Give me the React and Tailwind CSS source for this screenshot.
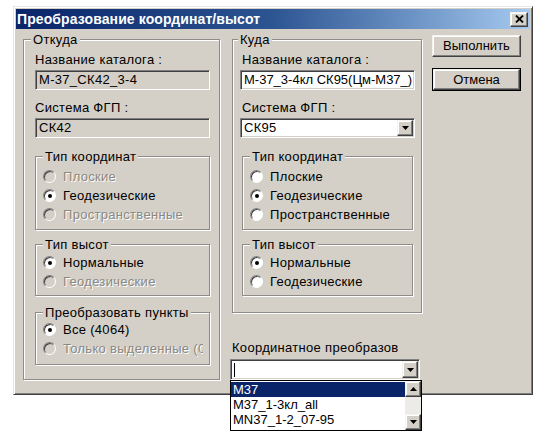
import React from "react";

const sunken =
  "border border-t-[#808080] border-l-[#808080] border-b-white border-r-white shadow-[inset_1px_1px_0_#404040,inset_-1px_-1px_0_#d4d0c8]";
const raised =
  "border border-t-[#f4f3ef] border-l-[#f4f3ef] border-b-[#404040] border-r-[#404040] shadow-[inset_-1px_-1px_0_#808080,inset_1px_1px_0_#ffffff]";
const etched =
  "border border-[#8e8c88] shadow-[1px_1px_0_#ffffff,inset_1px_1px_0_#ffffff]";

function Legend({ children, className = "" }) {
  return (
    <legend className={`px-[2px] bg-[#d4d0c8] leading-[15px] ${className}`}>
      {children}
    </legend>
  );
}

function Radio({ label, checked, disabled, clip }) {
  return (
    <div className="flex items-center h-[19px]">
      <span
        className={`w-[13px] h-[13px] shrink-0 rounded-full border border-t-[#808080] border-l-[#808080] border-b-white border-r-white shadow-[inset_1px_1px_0_#404040] flex items-center justify-center ${
          disabled ? "bg-[#d4d0c8]" : "bg-white"
        }`}
      >
        {checked && <span className="w-[4px] h-[4px] rounded-full bg-black" />}
      </span>
      <span
        className={`ml-[7px] whitespace-nowrap overflow-hidden ${clip ? "w-[140px]" : ""} ${
          disabled ? "text-[#8a8884] [text-shadow:1px_1px_0_#ffffff]" : "text-black"
        }`}
      >
        {label}
      </span>
    </div>
  );
}

function DownArrow() {
  return (
    <svg width="7" height="4" viewBox="0 0 7 4">
      <path d="M0 0h7L3.5 4z" fill="#000" />
    </svg>
  );
}

function UpArrow() {
  return (
    <svg width="7" height="4" viewBox="0 0 7 4">
      <path d="M0 4h7L3.5 0z" fill="#000" />
    </svg>
  );
}

function ArrowButton({ up }) {
  return (
    <div className={`w-[16px] h-[16px] bg-[#d4d0c8] flex items-center justify-center ${raised}`}>
      {up ? <UpArrow /> : <DownArrow />}
    </div>
  );
}

export default function App() {
  return (
    <div className="w-[540px] h-[442px] bg-white overflow-hidden font-['Liberation_Sans',Arial,sans-serif] text-[13px] tracking-[0.3px] text-black">
      <div
        className={`relative ml-[13px] mt-[6px] w-[520px] h-[389px] bg-[#d4d0c8] p-[2px] border border-t-[#e8e6e0] border-l-[#e8e6e0] border-b-[#404040] border-r-[#404040] shadow-[inset_1px_1px_0_#ffffff,inset_-1px_-1px_0_#808080]`}
      >
        {/* Title bar */}
        <div className="h-[20px] flex items-center justify-between bg-linear-to-r from-[#0a246a] via-[#2d5592] via-50% to-[#a6caf0] pl-[1px] pr-[2px]">
          <span className="text-white font-bold text-[14px] leading-[20px] whitespace-nowrap tracking-[0.1px]">
            Преобразование координат/высот
          </span>
          <div className={`w-[18px] h-[15px] bg-[#d4d0c8] flex items-center justify-center ${raised}`}>
            <svg width="9" height="8" viewBox="0 0 9 8">
              <path d="M1 0.5L8 7.5M8 0.5L1 7.5" stroke="#000" strokeWidth="1.8" />
            </svg>
          </div>
        </div>

        {/* Body */}
        <div className="flex items-start pl-[7px] pt-[3px]">
          {/* Left: Откуда */}
          <fieldset className={`w-[197px] h-[348px] pl-[11px] pr-[9px] ${etched}`}>
            <Legend className="-ml-[4px]">Откуда</Legend>
            <div className="mt-[5px] leading-[15px]">Название каталога :</div>
            <div className={`mt-[3px] h-[20px] bg-[#d4d0c8] pl-[3px] leading-[18px] ${sunken}`}>
              M-37_СК42_3-4
            </div>
            <div className="mt-[10px] leading-[15px]">Система ФГП :</div>
            <div className={`mt-[3px] h-[20px] bg-[#d4d0c8] pl-[3px] leading-[18px] ${sunken}`}>
              СК42
            </div>

            <fieldset className={`mt-[11px] pl-[7px] pb-[5px] ${etched}`}>
              <Legend>Тип координат</Legend>
              <div className="mt-[3px]">
                <Radio label="Плоские" disabled />
                <Radio label="Геодезические" checked />
                <Radio label="Пространственные" disabled />
              </div>
            </fieldset>

            <fieldset className={`mt-[7px] pl-[7px] pb-[4px] ${etched}`}>
              <Legend>Тип высот</Legend>
              <div className="mt-[1px]">
                <Radio label="Нормальные" checked />
                <Radio label="Геодезические" disabled />
              </div>
            </fieldset>

            <fieldset className={`mt-[9px] pl-[7px] pb-[6px] ${etched}`}>
              <Legend>Преобразовать пункты</Legend>
              <div>
                <Radio label="Все (4064)" checked />
                <Radio label="Только выделенные (0)" disabled clip />
              </div>
            </fieldset>
          </fieldset>

          {/* Right column */}
          <div className="ml-[12px] w-[190px] flex flex-col">
            <fieldset className={`w-[190px] h-[281px] pl-[7px] pr-[6px] ${etched}`}>
              <Legend className="-ml-[2px]">Куда</Legend>
              <div className="mt-[5px] ml-[2px] leading-[15px]">Название каталога :</div>
              <div className={`mt-[3px] h-[20px] bg-white pl-[3px] leading-[18px] whitespace-nowrap overflow-hidden tracking-[0px] ${sunken}`}>
                M-37_3-4кл СК95(Цм-М37_)
              </div>
              <div className="mt-[10px] ml-[2px] leading-[15px]">Система ФГП :</div>
              <div className={`mt-[3px] h-[20px] bg-white pl-[3px] pr-[1px] flex items-center justify-between ${sunken}`}>
                <span className="leading-[18px]">СК95</span>
                <ArrowButton />
              </div>

              <fieldset className={`mt-[11px] ml-[2px] mr-[2px] pl-[7px] pb-[5px] ${etched}`}>
                <Legend>Тип координат</Legend>
                <div className="mt-[3px]">
                  <Radio label="Плоские" />
                  <Radio label="Геодезические" checked />
                  <Radio label="Пространственные" />
                </div>
              </fieldset>

              <fieldset className={`mt-[7px] ml-[2px] mr-[2px] pl-[7px] pb-[4px] ${etched}`}>
                <Legend>Тип высот</Legend>
                <div className="mt-[1px]">
                  <Radio label="Нормальные" checked />
                  <Radio label="Геодезические" />
                </div>
              </fieldset>
            </fieldset>

            <div className="mt-[27px] leading-[15px] whitespace-nowrap">Координатное преобразов</div>
            <div className="relative mt-[4px] -ml-[2px] w-[190px]">
              <div className={`h-[21px] bg-white pl-[3px] pr-[1px] flex items-center justify-between ${sunken}`}>
                <span className="w-[1px] h-[14px] bg-black" />
                <div className="w-[16px] h-[17px] bg-[#d4d0c8] flex items-center justify-center border border-t-[#f4f3ef] border-l-[#f4f3ef] border-b-[#404040] border-r-[#404040] shadow-[inset_-1px_-1px_0_#808080,inset_1px_1px_0_#ffffff]">
                  <DownArrow />
                </div>
              </div>
              <div className="absolute left-0 top-full w-[192px] h-[51px] bg-white border border-black flex tracking-[0px]">
                <div className="flex-1 pt-[1px] leading-[15px]">
                  <div className="bg-[#0a246a] text-white pl-[2px]">M37</div>
                  <div className="pl-[2px]">M37_1-3кл_all</div>
                  <div className="pl-[2px]">MN37_1-2_07-95</div>
                </div>
                <div className="w-[16px] flex flex-col justify-between bg-[#ecebe7]">
                  <ArrowButton up />
                  <ArrowButton />
                </div>
              </div>
            </div>
          </div>

          {/* Buttons */}
          <div className="ml-[10px] mt-[3px] w-[89px] flex flex-col tracking-[0px]">
            <div className={`h-[22px] bg-[#d4d0c8] flex items-center justify-center ${raised}`}>
              Выполнить
            </div>
            <div className="mt-[11px] h-[23px] border border-black">
              <div className={`h-full bg-[#d4d0c8] flex items-center justify-center ${raised}`}>
                Отмена
              </div>
            </div>
          </div>
        </div>
      </div>
    </div>
  );
}
